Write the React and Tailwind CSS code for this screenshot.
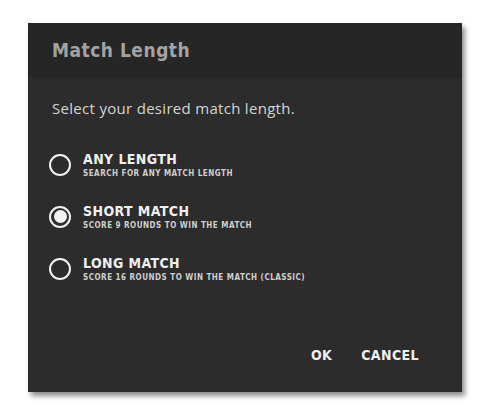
import { useState } from "react";

const OPTIONS = [
  { id: "any", title: "ANY LENGTH", desc: "SEARCH FOR ANY MATCH LENGTH" },
  { id: "short", title: "SHORT MATCH", desc: "SCORE 9 ROUNDS TO WIN THE MATCH" },
  { id: "long", title: "LONG MATCH", desc: "SCORE 16 ROUNDS TO WIN THE MATCH (CLASSIC)" },
];

const din = { fontFamily: '"DejaVu Sans Condensed", "DejaVu Sans", sans-serif' };

function Radio({ checked }) {
  return (
    <span className="w-[22px] h-[22px] rounded-full border-2 border-[#f2f2f2] flex items-center justify-center shrink-0">
      {checked && <span className="w-[13px] h-[13px] rounded-full bg-[#f2f2f2]" />}
    </span>
  );
}

export default function App() {
  const [value, setValue] = useState("short");

  return (
    <div className="w-[490px] h-[416px] bg-white pt-[23px] pl-[28px]">
      <div className="w-[434px] h-[369px] bg-[#2c2c2c] flex flex-col shadow-[3px_4px_5px_rgba(0,0,0,0.45)]">
        <div className="h-[55px] bg-[#262626] flex items-center pl-[24px]">
          <h1 className="text-[19px] font-bold text-[#a3a3a3] tracking-[0.5px]" style={din}>
            Match Length
          </h1>
        </div>
        <div className="flex-1 flex flex-col pl-[24px] pr-[24px]">
          <p
            className="mt-[19px] text-[15px] text-[#d4d4d4] tracking-[0.3px]"
            style={{ fontFamily: '"Open Sans", sans-serif' }}
          >
            Select your desired match length.
          </p>
          <div className="mt-[30px] -ml-[3px] flex flex-col gap-[22px]">
            {OPTIONS.map((o) => (
              <button
                key={o.id}
                onClick={() => setValue(o.id)}
                className="flex items-center gap-[12px] text-left"
              >
                <Radio checked={value === o.id} />
                <span className="flex flex-col" style={din}>
                  <span className="text-[14px] font-bold leading-[18px] text-[#f0f0f0] tracking-[0.4px]">
                    {o.title}
                  </span>
                  <span className="text-[8px] font-bold leading-[12px] text-[#cfcfcf] tracking-[0.5px]">
                    {o.desc}
                  </span>
                </span>
              </button>
            ))}
          </div>
          <div className="mt-auto mb-[26px] flex justify-end gap-[29px] pr-[19px]" style={din}>
            <button className="text-[14px] font-bold text-[#f0f0f0] tracking-[0.4px]">OK</button>
            <button className="text-[14px] font-bold text-[#f0f0f0] tracking-[0.4px]">CANCEL</button>
          </div>
        </div>
      </div>
    </div>
  );
}
